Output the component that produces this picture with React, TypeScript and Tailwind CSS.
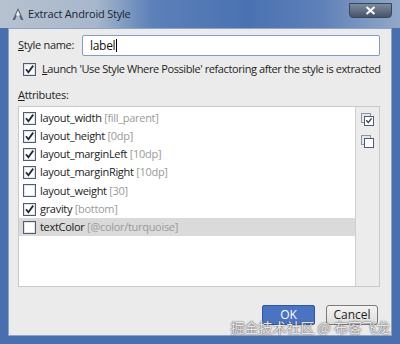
import React from 'react'

const attributes = [
    { name: 'layout_width', value: '[fill_parent]', checked: true },
    { name: 'layout_height', value: '[0dp]', checked: true },
    { name: 'layout_marginLeft', value: '[10dp]', checked: true },
    { name: 'layout_marginRight', value: '[10dp]', checked: true },
    { name: 'layout_weight', value: '[30]', checked: false },
    { name: 'gravity', value: '[bottom]', checked: true },
    { name: 'textColor', value: '[@color/turquoise]', checked: false },
]

const CheckBox = ({ checked }: { checked: boolean }) => (
    <svg width='13' height='13' viewBox='0 0 13 13' className='shrink-0'>
        <rect x='0.5' y='0.5' width='12' height='12' fill='#ffffff' stroke='#4f5b70' />
        <rect x='1.5' y='1.5' width='10' height='10' fill='none' stroke='#dfe3ea' />
        {checked && <path d='M3 6.2 L5.4 9.2 L10.2 2.6' fill='none' stroke='#222a38' strokeWidth='1.8' />}
    </svg>
)

const SelectIcon = ({ checked }: { checked: boolean }) => (
    <svg width='13' height='13' viewBox='0 0 13 13'>
        <rect x='0.5' y='0.5' width='9' height='9' fill='#e4e7ee' stroke='#8a93a8' />
        <rect x='3.5' y='3.5' width='9' height='9' fill='#ffffff' stroke='#4f5b78' />
        {checked && <path d='M5.3 7.3 L7.3 9.6 L10.6 5.4' fill='none' stroke='#2c3548' strokeWidth='1.3' />}
    </svg>
)

const App = () => {
    return (
        <div className='w-[400px] h-[344px] bg-[#4a6fae] flex flex-col relative overflow-hidden' style={{ fontFamily: '"Open Sans", "Liberation Sans", sans-serif' }}>

            {/* title bar */}
            <div className='h-[28px] flex items-center relative bg-[linear-gradient(90deg,#b7c2d0_0%,#a7b7cc_24%,#5c80b8_38%,#4a72b2_62%,#5e80b8_80%,#93a8c8_100%)]'>
                <svg width='14' height='14' viewBox='0 0 14 14' className='ml-[11px]'>
                    <path d='M7 1 L12.5 13 L10 13 L7 6 L4 13 L1.5 13 Z' fill='#5a6476' />
                    <path d='M7 3.5 L9.2 8.6 L4.8 8.6 Z' fill='#f4f6fa' />
                </svg>
                <span className='ml-[3px] text-[11px] text-[#1c2533] tracking-[-0.2px]'>Extract Android Style</span>
                <div className='ml-auto mr-[8px] -mt-[8px] w-[43px] h-[15px] rounded-b-[4px] border border-[#39475c] bg-[linear-gradient(180deg,#7d8a9e,#46536a)] flex items-center justify-center'>
                    <svg width='11' height='9' viewBox='0 0 11 9'>
                        <path d='M1.5 1 L9.5 8 M9.5 1 L1.5 8' stroke='#ffffff' strokeWidth='2' />
                    </svg>
                </div>
            </div>

            {/* body */}
            <div className='flex-1 mx-[8px] mb-[8px] bg-[#ebebeb] border border-[#8fa3c4] flex flex-col pl-[9px] pr-[11px] text-[11px] tracking-[-0.3px] text-[#1e1e1e]'>

                <div className='flex items-center mt-[6px] h-[21px]'>
                    <span className='w-[64px]'><span className='underline'>S</span>tyle name:</span>
                    <div className='flex-1 h-[21px] rounded-[2px] border border-[#7f9bc6] bg-white flex items-center pl-[7px] text-[12px] text-[#111]'>
                        label<span className='w-[1px] h-[13px] bg-black ml-[1px]' />
                    </div>
                </div>

                <div className='flex items-center mt-[7px] pl-[5px] gap-[6px] h-[13px]'>
                    <CheckBox checked />
                    <span className='whitespace-nowrap tracking-[-0.4px]'><span className='underline'>L</span>aunch 'Use Style Where Possible' refactoring after the style is extracted</span>
                </div>

                <div className='mt-[12px] leading-[14px]'><span className='underline'>A</span>ttributes:</div>

                <div className='mt-[4px] h-[181px] flex border border-[#c9c9c9] bg-white'>
                    <div className='flex-1 pt-[2px]'>
                        {attributes.map(a => (
                            <div key={a.name} className={`h-[18.2px] flex items-center gap-[4px] pl-[4px] ${a.name === 'textColor' ? 'bg-[#dadada]' : ''}`}>
                                <CheckBox checked={a.checked} />
                                <span className='whitespace-nowrap text-[#222]'>{a.name} <span className='text-[#9a9a9a]'>{a.value}</span></span>
                            </div>
                        ))}
                    </div>
                    <div className='w-[24px] bg-[#ececec] border-l border-[#cfcfcf] flex flex-col items-center pt-[6px] gap-[9px]'>
                        <SelectIcon checked />
                        <SelectIcon checked={false} />
                    </div>
                </div>

                <div className='flex justify-end gap-[11px] mt-[18px] pr-[2px] tracking-normal'>
                    <button className='w-[53px] h-[20px] rounded-[2px] bg-[#4a73c2] border border-[#2f57a5] text-white text-[12px]'>OK</button>
                    <button className='w-[52px] h-[20px] rounded-[3px] bg-[linear-gradient(180deg,#f4f4f4,#dcdcdc)] border border-[#7a7a7a] text-[12px] text-[#1e1e1e]'>Cancel</button>
                </div>
            </div>

            {/* watermark */}
            <div className='absolute right-[10px] bottom-[6px] text-[14px] text-white/85 [text-shadow:0_0_2px_#555,0_0_1px_#555]' style={{ fontFamily: '"Noto Sans CJK SC", "Noto Sans", sans-serif' }}>
                掘金技术社区 @ 布客飞龙
            </div>
        </div>
    )
}

export default App
